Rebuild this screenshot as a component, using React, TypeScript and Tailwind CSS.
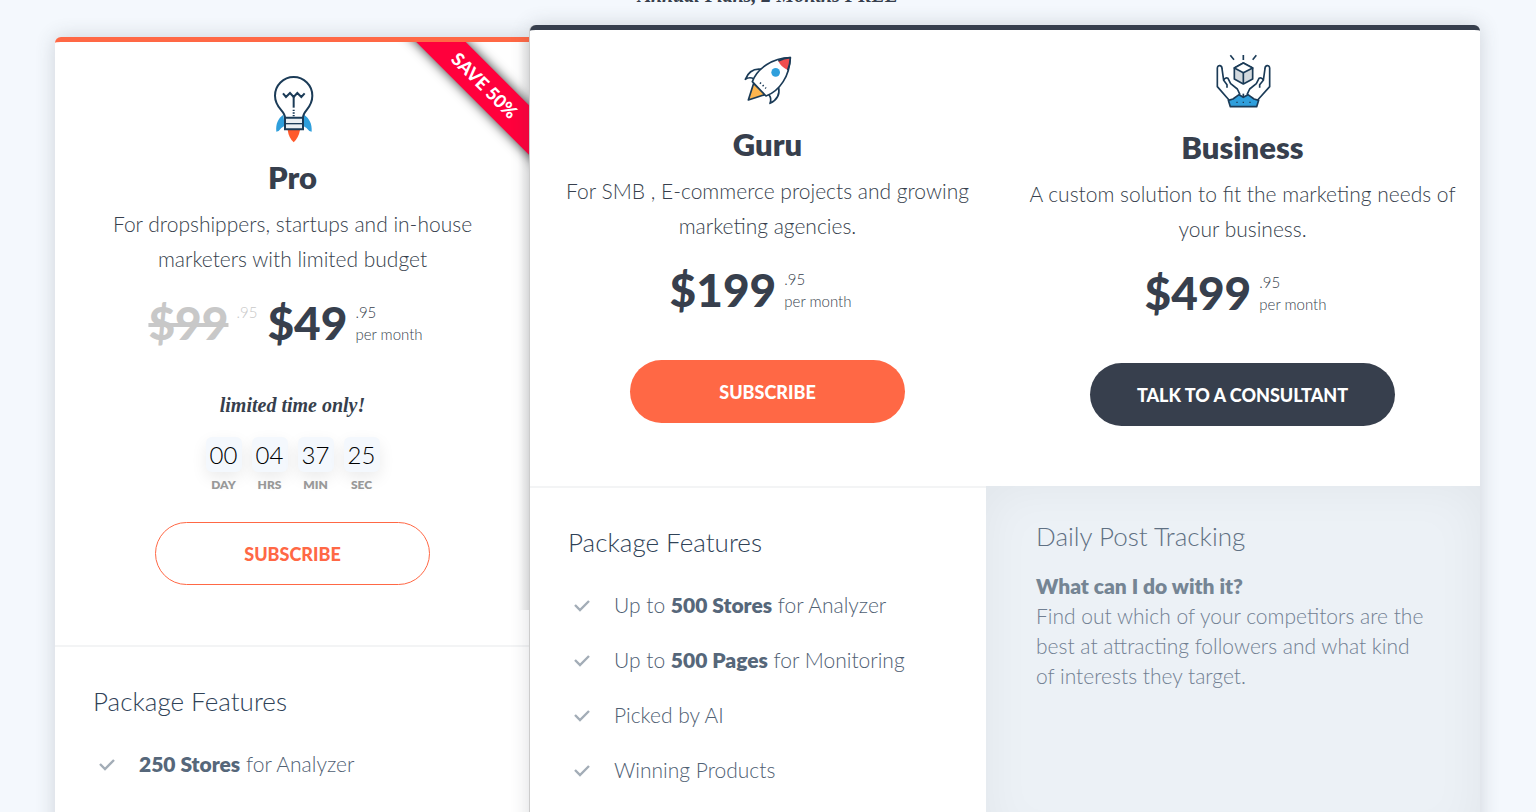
import { Fragment, type ReactNode } from 'react';

interface PriceProps {
  amount: string;
  old?: string;
}

interface PlanIntroProps {
  title: string;
  lines: string[];
  icon: ReactNode;
  price: PriceProps;
}

const timer = [
  { value: '00', label: 'DAY' },
  { value: '04', label: 'HRS' },
  { value: '37', label: 'MIN' },
  { value: '25', label: 'SEC' }
];

const proFeatures = [
  { bold: '250 Stores', after: ' for Analyzer' },
  { bold: '250 Pages', after: ' for Monitoring' }
];

const guruFeatures = [
  { before: 'Up to ', bold: '500 Stores', after: ' for Analyzer' },
  { before: 'Up to ', bold: '500 Pages', after: ' for Monitoring' },
  { before: 'Picked by AI' },
  { before: 'Winning Products' }
];

function BulbIcon() {
  return (
    <svg viewBox="93 44 132 204" className="-mb-1 h-[68px] w-11" fill="none" stroke="#1b3b57" strokeWidth="6" aria-hidden="true">
      <path d="M130 163 C114 174 107 190 109 214 L116 212 Q122 202 134 196 Z" fill="#2f9fdc" stroke="none" />
      <path d="M192 163 C208 174 217 190 215 214 L208 212 Q201 202 189 196 Z" fill="#2f9fdc" stroke="none" />
      <path d="M143 209 H180 Q176 232 161 246 Q146 232 143 209 Z" fill="#ff5a2c" stroke="none" />
      <path d="M135 172 C135 150 105 144 105 106 A56 56 0 0 1 217 106 C217 144 189 150 189 172" fill="#fff" />
      <path d="M135 172 H189 V207 H135 Z" fill="#e9eef2" />
      <path d="M135 190 H189" strokeWidth="4" />
      <path d="M129 99 L138 110 L150 98 L161 110 L172 98 L184 110 L194 99" />
      <path d="M161 109 V142" />
      <path d="M161 148 V170" strokeDasharray="4 4" />
    </svg>
  );
}

function RocketIcon() {
  return (
    <svg viewBox="70 47 150 150" className="h-[50px] w-[50px]" fill="none" stroke="#1b3b57" strokeWidth="5" strokeLinejoin="round" aria-hidden="true">
      <path d="M126 87 Q91 82 77 117 Q90 108 103 116" fill="#fff" />
      <path d="M177 142 Q183 174 151 189 Q157 173 147 163" fill="#fff" />
      <path d="M102 129 L86 179 L136 163 Z" fill="#fdb54e" />
      <path d="M98 124 C113 84 158 53 212 52 C210 106 181 151 139 167 Z" fill="#fff" />
      <path d="M176 63 Q193 54 212 52 Q211 72 204 89 Q184 80 176 63 Z" fill="#f04e4e" stroke="none" />
      <path d="M176 62 Q193 53 212 52 Q211 72 204 90" />
      <circle cx="168" cy="96" r="13" fill="#2f9fdc" stroke="none" />
      <path d="M121 127 L139 144" strokeDasharray="4 7" />
    </svg>
  );
}

function HandsIcon() {
  return (
    <svg viewBox="76 38 168 165" className="h-[55px] w-14" fill="none" stroke="#1b3b57" strokeWidth="5" strokeLinejoin="round" aria-hidden="true">
      <path d="M122 42 L133 55 M161 41 V56 M200 42 L189 55" />
      <path d="M161 65 L189 80 V113 L161 128 L134 113 V80 Z" fill="#d3d9de" />
      <path d="M161 65 L189 80 L161 94 L134 80 Z" fill="#fff" />
      <path d="M161 94 V128" />
      <path d="M118 176 L83 136 V80 Q84 72 91 73 Q97 74 97 82 L102 117 L112 130 V139 M102 117 Q106 107 115 111 L123 127 L143 143 L151 160" />
      <path d="M204 176 L240 136 V80 Q239 72 232 73 Q226 74 226 82 L221 117 L210 130 V139 M221 117 Q217 107 208 111 L200 127 L180 143 L172 160" />
      <path d="M116 177 L130 173 L148 160 L161 168 L175 160 L193 173 L207 177 L201 196 H122 Z" fill="#2f9fdc" />
      <path d="M161 157 V168" />
      <path d="M140 183 H144 M159 183 H163 M179 183 H183" strokeWidth="4" />
    </svg>
  );
}

function Price({ amount, old }: PriceProps) {
  return (
    <div className="mt-[22px] mr-3.5 flex h-[50px] items-center justify-center">
      {old && (
        <div className="mr-2.5 flex items-center gap-2 text-[#c8c8c8]">
          <s className="text-[46px] leading-[50px] font-black">{old}</s>
          <span className="mb-[22px] text-[15px] leading-[22px]">.95</span>
        </div>
      )}
      <strong className="text-[46px] leading-[50px] font-black">{amount}</strong>
      <div className="ml-2 text-left text-[15px] leading-[22px]">
        .95
        <br />
        per month
      </div>
    </div>
  );
}

function PlanIntro({ title, lines, icon, price }: PlanIntroProps) {
  return (
    <>
      <div className="flex justify-center">{icon}</div>
      <h2 className="mt-[18px] text-[31px] leading-10 font-extrabold">{title}</h2>
      <p className="mt-[9px] text-[21px] leading-[35px]">
        {lines.map((line, i) => (
          <Fragment key={line}>
            {i > 0 && <br />}
            {line}
          </Fragment>
        ))}
      </p>
      <Price {...price} />
    </>
  );
}

function FeatureList({ items }: { items: { before?: string; bold?: string; after?: string }[] }) {
  return (
    <div className="px-[38px] pt-[39px]">
      <h3 className="text-[26px] leading-[30px] text-[#2f4257]">Package Features</h3>
      <ul className="mt-5 text-[21px] text-[#4f6073]">
        {items.map((item, i) => (
          <li key={i} className="flex h-[55px] items-center gap-6 pl-1.5">
            <svg viewBox="0 0 16 16" className="h-4 w-4" fill="none" stroke="#a3adb7" strokeWidth="2.4" aria-hidden="true">
              <path d="M1 8 L6 13 L15 4" />
            </svg>
            <span>
              {item.before}
              <b className="font-extrabold text-[#56677a]">{item.bold}</b>
              {item.after}
            </span>
          </li>
        ))}
      </ul>
    </div>
  );
}

export default function App() {
  return (
    <main className="h-screen overflow-hidden bg-[#f4f8fd] font-['Lato','Noto_Sans',sans-serif] font-light text-[#373f4d]">
      <p className="-mt-5 h-[45px] text-center font-['Liberation_Serif',serif] text-xl leading-[30px] font-bold italic">
        Annual Plans, 2 Months FREE
      </p>

      <div className="mr-14 ml-[55px] grid h-full grid-cols-[1fr_2fr]">
        {/* Pro plan */}
        <section className="relative mt-3 rounded-tl-md border-t-[5px] border-[#ff6845] bg-white text-center shadow-[0_0_20px_rgba(55,63,77,0.2)]">
          <div className="absolute top-0 right-0 h-[568px] w-3 bg-gradient-to-r from-transparent to-black/10" />
          <div className="absolute top-0 right-0 h-[150px] w-[150px] overflow-hidden">
            <div className="absolute top-[26px] -left-2 w-[225px] rotate-45 bg-[#ff003c] text-center text-lg leading-[35px] font-black text-white shadow-[0_0_12px_rgba(0,0,0,0.8)]">
              SAVE 50%
            </div>
          </div>

          <div className="border-b-2 border-[#f3f4f5] pt-[33px] pb-[60px]">
            <PlanIntro
              title="Pro"
              icon={<BulbIcon />}
              lines={['For dropshippers, startups and in-house', 'marketers with limited budget']}
              price={{ old: '$99', amount: '$49' }}
            />
            <p className="mt-[42px] font-['Liberation_Serif',serif] text-xl leading-[30px] font-bold italic">limited time only!</p>
            <div className="mt-[17px] flex justify-center gap-2.5">
              {timer.map((t) => (
                <div key={t.label} className="w-9">
                  <div className="rounded-md bg-[#f4f8fd] text-2xl leading-[35px] text-black shadow-[0_6px_16px_rgba(0,0,0,0.08)]">
                    {t.value}
                  </div>
                  <div className="mt-[5px] text-xs leading-4 font-extrabold text-[#999]">{t.label}</div>
                </div>
              ))}
            </div>
            <button className="mt-[29px] h-[63px] w-[275px] rounded-full border border-[#ff6845] text-lg font-black text-[#ff6845]">
              SUBSCRIBE
            </button>
          </div>
          <div className="text-left">
            <FeatureList items={proFeatures} />
          </div>
        </section>

        {/* Guru and Business plans */}
        <section className="relative flex flex-col rounded-t-md border-t-[5px] border-[#373f4d] bg-white shadow-[-1px_0_0_#ccc,0_0_20px_rgba(55,63,77,0.2)]">
          <div className="grid grid-cols-2 text-center">
            <div className="pt-[26px] pb-[63px]">
              <PlanIntro
                title="Guru"
                icon={<RocketIcon />}
                lines={['For SMB , E-commerce projects and growing', 'marketing agencies.']}
                price={{ amount: '$199' }}
              />
              <button className="mt-[45px] h-[63px] w-[275px] rounded-full bg-[#ff6845] text-lg font-black text-white">
                SUBSCRIBE
              </button>
            </div>
            <div className="pt-6">
              <PlanIntro
                title="Business"
                icon={<HandsIcon />}
                lines={['A custom solution to fit the marketing needs of', 'your business.']}
                price={{ amount: '$499' }}
              />
              <button className="mt-[45px] h-[63px] w-[305px] rounded-full bg-[#373f4d] text-lg font-black text-white">
                TALK TO A CONSULTANT
              </button>
            </div>
          </div>

          <div className="flex grow">
            <div className="grow border-t-2 border-[#f3f4f5]">
              <FeatureList items={guruFeatures} />
            </div>
            <aside className="w-[52%] bg-[#ecf1f6] px-[50px] pt-[35px] text-[21px] leading-[30px] text-[#718093] shadow-[inset_0_0_50px_rgba(0,0,0,0.05)]">
              <h3 className="text-[26px] leading-[30px] text-[#5f7083]">Daily Post Tracking</h3>
              <p className="mt-5">
                <b className="font-extrabold text-[#758594]">What can I do with it?</b>
                <br />
                Find out which of your competitors are the best at attracting followers and what kind of interests they target.
              </p>
            </aside>
          </div>
        </section>
      </div>
    </main>
  );
}
